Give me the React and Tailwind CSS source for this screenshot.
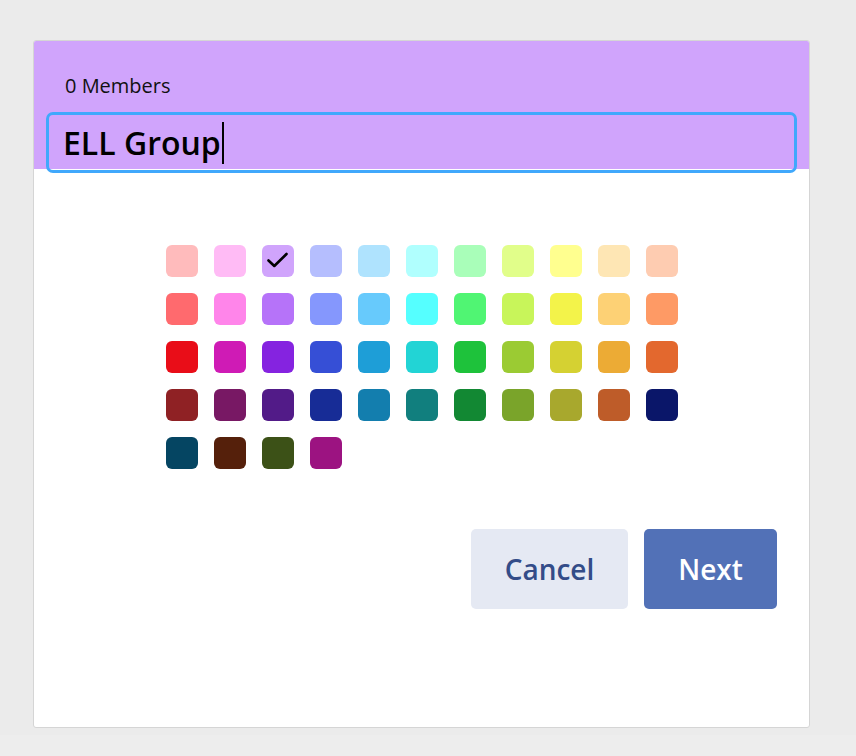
import React from "react";

const rows = [
  ["#ffbbbc", "#ffbbf5", "#d0a4fc", "#b5befe", "#afe3fe", "#b0fffe", "#a9feb9", "#e1fe8a", "#ffff8f", "#fee6b4", "#feccb1"],
  ["#ff6a6e", "#ff85ea", "#b673f9", "#8597fd", "#67cafc", "#55ffff", "#50f573", "#c8f55a", "#f3f34a", "#fdd175", "#fe9a65"],
  ["#e90d18", "#cf1bb5", "#8523e0", "#364fd6", "#1e9ed7", "#22d4d5", "#1ec23b", "#9bcb33", "#d5d132", "#ecab35", "#e3682e"],
  ["#8f2124", "#781864", "#521b88", "#172c96", "#137eae", "#117f7e", "#128833", "#7aa42a", "#a8a82d", "#be5c29", "#0a1669"],
  ["#054562", "#55200b", "#3c5117", "#9c1381"],
];

export default function App() {
  const font = { fontFamily: '"Open Sans", "Noto Sans", sans-serif' };
  return (
    <div className="w-[856px] h-[756px] bg-[#ebebeb] flex flex-col" style={font}>
      <div className="flex-1 pt-[40px] pl-[33px]">
        <div className="w-[777px] h-[688px] bg-white border border-[#d5d5d5] rounded-[3px] flex flex-col">
          <div className="h-[128px] shrink-0 bg-[#d0a4fc] px-[12px] pt-[33px] rounded-t-[2px]">
            <div className="pl-[19px] text-[20px] leading-[24px] text-[#111]">0 Members</div>
            <div className="mt-[14px] h-[61px] border-[3px] border-[#40a8fc] rounded-[7px] flex items-center pl-[14px] relative z-10">
              <span className="text-[32px] font-semibold text-black leading-none">ELL Group</span>
              <span className="w-[2px] h-[42px] bg-black ml-[1px]" />
            </div>
          </div>
          <div className="flex justify-center pt-[76px]">
            <div className="grid grid-cols-[repeat(11,32px)] gap-4">
              {rows.flat().map((c, i) => (
                <div
                  key={i}
                  className="w-8 h-8 rounded-[6px] flex items-center justify-center"
                  style={{ backgroundColor: c }}
                >
                  {i === 2 && (
                    <svg width="32" height="32" viewBox="0 0 32 32" fill="none">
                      <path d="M6.5 15.5 L12.3 21 L24.5 9" stroke="#000" strokeWidth="2.6" strokeLinecap="round" strokeLinejoin="round" />
                    </svg>
                  )}
                </div>
              ))}
            </div>
          </div>
          <div className="flex justify-end gap-4 pr-[32px] mt-[60px]">
            <button className="w-[157px] h-[80px] rounded-[5px] bg-[#e5e9f3] text-[#334c88] text-[28px] font-semibold">
              Cancel
            </button>
            <button className="w-[133px] h-[80px] rounded-[5px] bg-[#5271b7] text-white text-[28px] font-semibold">
              Next
            </button>
          </div>
        </div>
      </div>
      <div className="h-[21px] bg-[#ededed]" />
    </div>
  );
}
